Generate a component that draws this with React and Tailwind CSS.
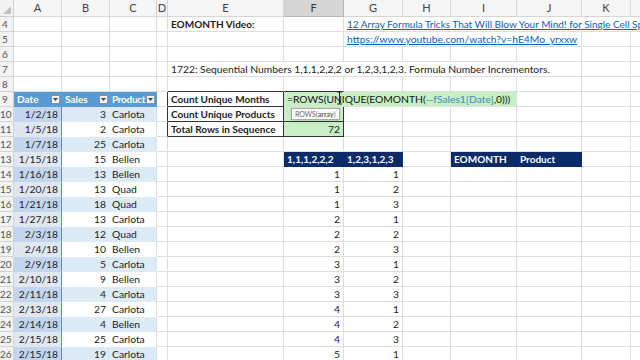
import React from 'react';

const COLS = ['A', 'B', 'C', 'D', 'E', 'F', 'G', 'H', 'I', 'J', 'K', 'L'];
const SPAN = { 1: '', 2: 'col-span-2', 3: 'col-span-3', 4: 'col-span-4', 5: 'col-span-5', 6: 'col-span-6', 7: 'col-span-7' };
const GRID = 'grid grid-cols-[14px_48px_48px_47px_11px_116px_60px_59px_48px_66px_65px_49px_40px]';
const GRIDLINE = 'border-r border-b border-[#dedede]';
const DARK = 'border-r border-b border-[#333]';
const NAVY = 'bg-[#0b2a68] text-white font-bold text-[10px]';
const GREEN = 'bg-[#c9efc6]';

const sales = [
  ['1/2/18', 3, 'Carlota'],
  ['1/5/18', 2, 'Carlota'],
  ['1/7/18', 25, 'Carlota'],
  ['1/15/18', 15, 'Bellen'],
  ['1/16/18', 13, 'Bellen'],
  ['1/20/18', 13, 'Quad'],
  ['1/21/18', 18, 'Quad'],
  ['1/27/18', 13, 'Carlota'],
  ['2/3/18', 12, 'Quad'],
  ['2/4/18', 10, 'Bellen'],
  ['2/9/18', 5, 'Carlota'],
  ['2/10/18', 9, 'Bellen'],
  ['2/11/18', 4, 'Carlota'],
  ['2/13/18', 27, 'Carlota'],
  ['2/14/18', 4, 'Bellen'],
  ['2/15/18', 25, 'Carlota'],
  ['2/15/18', 19, 'Carlota'],
];

// filter button sits over the header text, like Excel draws it
const DropBtn = () => (
  <div className="absolute right-[1px] top-[3px] w-[9px] h-[9px] bg-[#f2f2f2] border border-[#8f8f8f] flex items-center justify-center">
    <svg width="5" height="3" viewBox="0 0 5 3">
      <path d="M0 0h5L2.5 3z" fill="#444" />
    </svg>
  </div>
);

const TableHead = ({ label }) => (
  <>
    {label}
    <DropBtn />
  </>
);

const Formula = () => (
  <>
    =ROWS(UNIQUE(EOMONTH(<span className="text-[#3b8bbf]">--fSales1[Date]</span>,0)))
    <svg className="absolute left-[52px] top-[-1px]" width="7" height="14" viewBox="0 0 7 14">
      <path d="M1 1h5M3.5 1v12M1 13h5" stroke="#222" strokeWidth="1" fill="none" />
    </svg>
  </>
);

const Tooltip = () => (
  <div className="absolute left-[7px] top-[1px] h-[12px] px-[3px] bg-white border border-[#a8a8a8] text-[7px] leading-[10px] text-[#666] text-left shadow-sm">
    ROWS(<span className="font-bold">array</span>)
  </div>
);

// build the sheet, row number -> cells keyed by column letter
const sheet = {};
for (let r = 4; r <= 26; r++) sheet[r] = {};

sheet[4].E = { t: 'EOMONTH Video:', cls: 'font-bold text-[10px]' };
sheet[4].G = {
  span: 6,
  t: '12 Array Formula Tricks That Will Blow Your Mind! for Single Cell Spill Array Formulas',
  cls: 'text-[#0563c1] underline text-[10px]',
};
sheet[5].G = { span: 4, t: 'https://www.youtube.com/watch?v=hE4Mo_yrxxw', cls: 'text-[#0563c1] underline' };
sheet[7].E = { span: 6, t: '1722: Sequential Numbers 1,1,1,2,2,2 or 1,2,3,1,2,3. Formula Number Incrementors.' };

// summary box
sheet[8].E = { bc: 'border-r border-b border-r-[#dedede] border-b-[#333]' };
sheet[8].F = { bc: 'border-r border-b border-r-[#dedede] border-b-[#333]' };
['Count Unique Months', 'Count Unique Products', 'Total Rows in Sequence'].forEach((label, i) => {
  sheet[9 + i].D = { bc: 'border-r border-b border-r-[#333] border-b-[#dedede]' };
  sheet[9 + i].E = { t: label, cls: 'font-bold text-[10px]', bc: DARK };
});
sheet[9].F = {
  span: 4,
  t: <Formula />,
  cls: `${GREEN} relative overflow-visible text-[#111]`,
  bc: 'border-r border-b border-r-transparent border-b-[#dedede]',
};
sheet[10].F = { t: <><Tooltip />3</>, cls: `${GREEN} text-right relative overflow-visible`, bc: DARK };
sheet[11].F = { t: '72', cls: `${GREEN} text-right`, bc: DARK };

// excel table
const HEAD = 'bg-[#5b9bd5] text-white font-bold text-[10px] relative';
sheet[9].A = { t: <TableHead label="Date" />, cls: HEAD, bc: 'border-r border-b border-[#5b9bd5]' };
sheet[9].B = { t: <TableHead label="Sales" />, cls: HEAD, bc: 'border-r border-b border-[#5b9bd5]' };
sheet[9].C = {
  t: <TableHead label="Product" />,
  cls: `${HEAD} pl-[2px] tracking-[-0.3px]`,
  bc: 'border-r border-b border-[#5b9bd5]',
};
sales.forEach(([d, s, p], k) => {
  const band = k % 2 === 0;
  const row = sheet[10 + k];
  row.A = {
    t: d,
    cls: `text-right ${band ? 'bg-[#c3d6ee]' : 'bg-[#e1e7f0]'}`,
    bc: 'border-r border-b border-r-[#5a8bc8] border-b-transparent',
  };
  row.B = {
    t: s,
    cls: `text-right ${band ? 'bg-[#ddebf7]' : 'bg-white'}`,
    bc: 'border-r border-b border-r-transparent border-b-transparent',
  };
  row.C = {
    t: p,
    cls: `pl-[2px] ${band ? 'bg-[#ddebf7]' : 'bg-white'}`,
    bc: 'border-r border-b border-r-[#dedede] border-b-transparent',
  };
});

// sequence tables
sheet[13].F = { t: '1,1,1,2,2,2', cls: NAVY, bc: 'border-r border-b border-[#0b2a68]' };
sheet[13].G = { t: '1,2,3,1,2,3', cls: NAVY, bc: 'border-r border-b border-[#0b2a68]' };
sheet[13].I = { t: 'EOMONTH', cls: NAVY, bc: 'border-r border-b border-[#0b2a68]' };
sheet[13].J = { t: 'Product', cls: NAVY, bc: 'border-r border-b border-[#0b2a68]' };
for (let k = 0; k < 13; k++) {
  sheet[14 + k].F = { t: Math.floor(k / 3) + 1, cls: 'text-right' };
  sheet[14 + k].G = { t: (k % 3) + 1, cls: 'text-right' };
}

function Row({ n, cells }) {
  const out = [
    <div
      key="h"
      className="h-[15px] bg-[#f3f3f3] border-r border-b border-[#d4d4d4] text-[#555] text-[10px] leading-[14px] overflow-hidden"
    >
      <div className="w-[10px] text-center">{n}</div>
    </div>,
  ];
  for (let i = 0; i < COLS.length; ) {
    const c = cells[COLS[i]] || {};
    const span = c.span || 1;
    out.push(
      <div
        key={COLS[i]}
        className={[
          'h-[15px] leading-[14px] whitespace-nowrap overflow-hidden px-[3px]',
          SPAN[span],
          c.bc || GRIDLINE,
          c.cls || '',
        ].join(' ')}
      >
        {c.t}
      </div>
    );
    i += span;
  }
  return <div className={GRID}>{out}</div>;
}

const App = () => {
  return (
    <div className="w-[640px] h-[360px] overflow-hidden bg-white text-[10.3px] text-[#222] font-['Lato','Liberation_Sans',sans-serif]">
      <div className={GRID}>
        <div className="h-[17px] bg-[#f3f3f3] border-r border-b border-[#cfcfcf] flex items-end justify-end p-[2px]">
          <svg width="8" height="8" viewBox="0 0 8 8">
            <path d="M8 0v8H0z" fill="#c3c3c3" />
          </svg>
        </div>
        {COLS.map((col) => (
          <div
            key={col}
            className={`h-[17px] border-r border-b text-[11px] leading-[16px] text-center ${
              col === 'F'
                ? 'bg-[#d6d6d6] border-[#b5b5b5] text-[#333]'
                : 'bg-[#f6f6f6] border-[#d6d6d6] text-[#444]'
            }`}
          >
            {col}
          </div>
        ))}
      </div>
      {Object.keys(sheet).map((n) => (
        <Row key={n} n={n} cells={sheet[n]} />
      ))}
    </div>
  );
};

export default App;
